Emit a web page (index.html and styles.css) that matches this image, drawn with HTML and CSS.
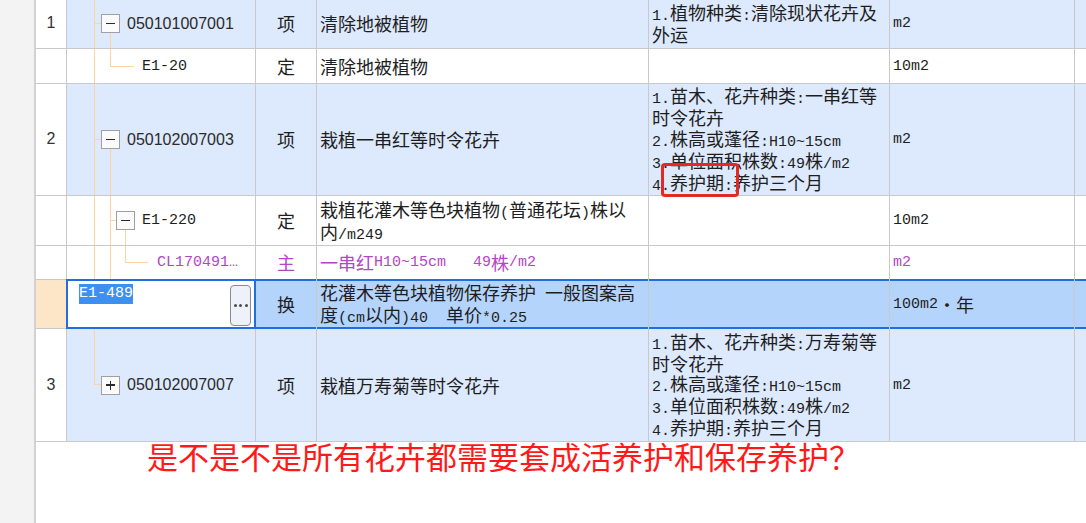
FILE: index.html
```html
<!DOCTYPE html>
<html lang="zh-CN">
<head>
<meta charset="utf-8">
<title>清单定额</title>
<link rel="stylesheet" href="styles.css">
</head>
<body>
<div class="screen">
  <aside class="side"></aside>
  <main class="main">
    <div class="grid">
      <div class="row item">
        <div class="c num">1</div>
        <div class="c code tr-a"><span class="tbox"></span><span class="cn">050101007001</span></div>
        <div class="c type">项</div>
        <div class="c name">清除地被植物</div>
        <div class="c feat"><div><span class="m">1.</span>植物种类<span class="m">:</span>清除现状花卉及<br>外运</div></div>
        <div class="c unit"><span class="m">m2</span></div>
        <div class="c end"></div>
      </div>
      <div class="row sub">
        <div class="c num"></div>
        <div class="c code tr-b"><span class="m">E1-20</span></div>
        <div class="c type">定</div>
        <div class="c name">清除地被植物</div>
        <div class="c feat"></div>
        <div class="c unit"><span class="m">10m2</span></div>
        <div class="c end"></div>
      </div>
      <div class="row item">
        <div class="c num">2</div>
        <div class="c code tr-c"><span class="tbox"></span><span class="cn">050102007003</span></div>
        <div class="c type">项</div>
        <div class="c name">栽植一串红等时令花卉</div>
        <div class="c feat marked"><div><span class="m">1.</span>苗木、花卉种类<span class="m">:</span>一串红等<br>时令花卉<br><span class="m">2.</span>株高或蓬径<span class="m">:H10~15cm</span><br><span class="m">3.</span>单位面积株数<span class="m">:49</span>株<span class="m">/m2</span><br><span class="m">4.</span>养护期<span class="m">:</span>养护三个月</div><span class="mark"></span></div>
        <div class="c unit"><span class="m">m2</span></div>
        <div class="c end"></div>
      </div>
      <div class="row sub">
        <div class="c num"></div>
        <div class="c code tr-d"><span class="tbox"></span><span class="m">E1-220</span></div>
        <div class="c type">定</div>
        <div class="c name"><div>栽植花灌木等色块植物<span class="m">(</span>普通花坛<span class="m">)</span>株以<br>内<span class="m">/m249</span></div></div>
        <div class="c feat"></div>
        <div class="c unit"><span class="m">10m2</span></div>
        <div class="c end"></div>
      </div>
      <div class="row sub mat">
        <div class="c num"></div>
        <div class="c code tr-e"><span class="m">CL170491…</span></div>
        <div class="c type">主</div>
        <div class="c name">一串红<span class="m">H10~15cm&nbsp;&nbsp;&nbsp;49</span>株<span class="m">/m2</span></div>
        <div class="c feat"></div>
        <div class="c unit"><span class="m">m2</span></div>
        <div class="c end"></div>
      </div>
      <div class="row sel">
        <div class="c num"></div>
        <div class="c code edit"><span class="hl">E1-489</span><button class="more" type="button"><i></i><i></i><i></i></button></div>
        <div class="c type">换</div>
        <div class="c name"><div>花灌木等色块植物保存养护<span class="m"> </span>一般图案高<br>度<span class="m">(cm</span>以内<span class="m">)40&nbsp;&nbsp;</span>单价<span class="m">*0.25</span></div></div>
        <div class="c feat"></div>
        <div class="c unit"><span class="m">100m2</span>・年</div>
        <div class="c end"></div>
      </div>
      <div class="row item">
        <div class="c num">3</div>
        <div class="c code tr-f"><span class="tbox plus"></span><span class="cn">050102007007</span></div>
        <div class="c type">项</div>
        <div class="c name">栽植万寿菊等时令花卉</div>
        <div class="c feat"><div><span class="m">1.</span>苗木、花卉种类<span class="m">:</span>万寿菊等<br>时令花卉<br><span class="m">2.</span>株高或蓬径<span class="m">:H10~15cm</span><br><span class="m">3.</span>单位面积株数<span class="m">:49</span>株<span class="m">/m2</span><br><span class="m">4.</span>养护期<span class="m">:</span>养护三个月</div></div>
        <div class="c unit"><span class="m">m2</span></div>
        <div class="c end"></div>
      </div>
    </div>
    <p class="question">是不是不是所有花卉都需要套成活养护和保存养护？</p>
  </main>
</div>
</body>
</html>
```

FILE: styles.css
```css
* { box-sizing: border-box; }
html, body { margin: 0; padding: 0; }
body {
  font-family: "Noto Sans CJK SC", "Noto Sans", sans-serif;
  color: #1e1e1e;
  background: #fff;
  overflow: hidden;
}
.screen {
  --tl: linear-gradient(#fbd4a0, #fbd4a0);
  --blue: #1f6fe2;
  display: flex;
  width: 1086px;
  height: 523px;
  overflow: hidden;
}
.side {
  width: 34px;
  flex: none;
  background: #f3f3f3;
}
.main {
  flex: 1;
  min-width: 0;
  border-left: 2px solid #d2d2d2;
  background: #fff;
}
.grid {
  display: grid;
  grid-template-columns: 30px 188px 60px 331px 240px 184px 1fr;
  grid-template-rows: 49px 34px 111px 49px 33px 48px 112px;
  gap: 1px;
  background: #c9c9c9;
  margin-top: -1px;
  border-bottom: 1px solid #c9c9c9;
  font-size: 18px;
  line-height: 20.5px;
}
.row { display: contents; }
.c {
  background-color: #fff;
  display: flex;
  align-items: center;
  min-width: 0;
  white-space: nowrap;
}
.row.item > .c { background-color: #dde9fc; }
.row.item > .num { background-color: #fff; }

.m {
  font-family: "Liberation Mono", monospace;
  font-size: 15px;
  line-height: 1;
}
.cn {
  font-family: "Liberation Sans", sans-serif;
  font-size: 16px;
  line-height: 1;
  color: #2b2b2b;
}
.num {
  justify-content: center;
  font-family: "Liberation Sans", sans-serif;
  font-size: 16px;
  color: #333;
}
.type { justify-content: center; }
.name, .feat, .unit { padding-left: 3px; }

/* tree */
.code { background-repeat: no-repeat; }
.tbox {
  flex: none;
  width: 19px;
  height: 19px;
  margin-right: 7px;
  border: 1px solid #a0a0a0;
  background: #fbfbfb;
  display: grid;
  place-items: center;
}
.tbox::before, .tbox::after {
  content: "";
  grid-area: 1 / 1;
  background: #2a2a2a;
}
.tbox::before { width: 9px; height: 1.5px; }
.tbox::after { width: 0; height: 0; }
.tbox.plus::after { width: 1.5px; height: 9px; }

.tr-a {
  padding-left: 34px;
  background-image: var(--tl), var(--tl), var(--tl);
  background-position: 27px 0, 27px 24px, 43px 33px;
  background-size: 1px 100%, 7px 1px, 1px 100%;
}
.tr-b {
  padding-left: 75px;
  background-image: var(--tl), var(--tl), var(--tl);
  background-position: 27px 0, 43px 0, 43px 17px;
  background-size: 1px 100%, 1px 17px, 24px 1px;
}
.tr-c {
  padding-left: 34px;
  background-image: var(--tl), var(--tl), var(--tl);
  background-position: 27px 0, 27px 55px, 43px 65px;
  background-size: 1px 100%, 7px 1px, 1px 100%;
}
.tr-d {
  padding-left: 49px;
  background-image: var(--tl), var(--tl), var(--tl), var(--tl);
  background-position: 27px 0, 43px 0, 43px 24px, 58px 34px;
  background-size: 1px 100%, 1px 100%, 6px 1px, 1px 100%;
}
.tr-e {
  padding-left: 90px;
  background-image: var(--tl), var(--tl), var(--tl), var(--tl);
  background-position: 27px 0, 43px 0, 58px 0, 58px 16px;
  background-size: 1px 100%, 1px 100%, 1px 16px, 23px 1px;
}
.tr-f {
  padding-left: 34px;
  background-image: var(--tl), var(--tl);
  background-position: 27px 0, 27px 55px;
  background-size: 1px 55px, 7px 1px;
}

/* material row */
.row.mat > .c { color: #b445c6; }

/* selected row */
.row.sel > .c {
  background-color: #b5d4fc;
  border-top: 1px solid var(--blue);
  border-bottom: 1px solid var(--blue);
  box-shadow: 0 -1px 0 var(--blue), 0 1px 0 var(--blue);
}
.row.sel > .num {
  background-color: #fde6c8;
  border: 0;
  box-shadow: none;
}
.row.sel > .code.edit {
  background-color: #fff;
  border: 1px solid var(--blue);
  box-shadow: 0 0 0 1px var(--blue);
  align-items: flex-start;
  justify-content: space-between;
  padding: 3px 3px 0 11px;
}
.hl {
  display: inline-block;
  height: 20px;
  line-height: 20px;
  padding: 0;
  background: #3d8ff0;
  color: #fff;
  font-family: "Liberation Mono", monospace;
  font-size: 15px;
}
.more {
  align-self: center;
  width: 21px;
  height: 41px;
  margin: 0;
  padding: 0;
  border: 1.5px solid #8a8a8a;
  border-radius: 4px;
  background: #eef1f9;
  display: flex;
  align-items: center;
  justify-content: center;
  gap: 2.5px;
}
.more i {
  display: block;
  width: 3px;
  height: 3px;
  border-radius: 50%;
  background: #4a4a4a;
}

/* annotation */
.marked { position: relative; }
.mark {
  position: absolute;
  left: 12px;
  top: 79px;
  width: 78px;
  height: 34px;
  border: 3px solid #e42a1f;
  border-radius: 4px;
}

.question {
  margin: -2px 0 0;
  padding-left: 111px;
  font-size: 31px;
  line-height: 1;
  color: #ff1a1a;
  white-space: nowrap;
}
```
